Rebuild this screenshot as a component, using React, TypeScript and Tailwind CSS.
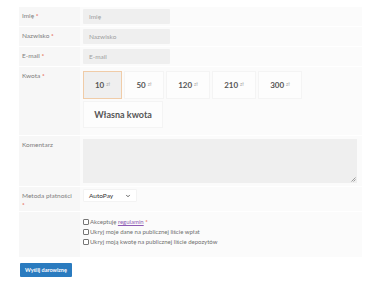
import { ChevronDown } from "lucide-react";

const Req = () => <span className="text-[#e2401c]"> *</span>;

const amounts = ["10", "50", "120", "210", "300"];

const TextInput = ({ placeholder }: { placeholder: string }) => (
  <div className="w-[87px] h-[15px] bg-[#efefef] rounded-[1px] px-[6px] flex items-center text-[6.5px] text-[#a0a0a0]">
    {placeholder}
  </div>
);

const Row = ({ label, children, last }: { label: React.ReactNode; children: React.ReactNode; last?: boolean }) => (
  <div className={`grid grid-cols-[61px_282px] ${last ? "" : "border-b border-white"}`}>
    <div className="bg-[#f7f7f7] px-[3px] pt-[4px] text-[6.5px] leading-[9px] text-[#808080]">{label}</div>
    <div className="bg-[#fbfbfb] px-[3px] py-[2px]">{children}</div>
  </div>
);

export default function App() {
  return (
    <div className="w-[369px] h-[288px] bg-white pt-[7px] pl-[19px]" style={{ fontFamily: "Lato, 'Open Sans', sans-serif" }}>
      <div className="w-[343px]">
        <Row label={<>Imię<Req /></>}>
          <TextInput placeholder="Imię" />
        </Row>
        <Row label={<>Nazwisko<Req /></>}>
          <TextInput placeholder="Nazwisko" />
        </Row>
        <Row label={<>E-mail<Req /></>}>
          <TextInput placeholder="E-mail" />
        </Row>
        <Row label={<>Kwota<Req /></>}>
          <div className="pt-[2px] pb-[5px] flex flex-col gap-[2px]">
            <div className="flex gap-[2px]">
              {amounts.map((a, i) => (
                <div
                  key={a}
                  className={`h-[28px] px-[10px] flex items-center justify-center gap-[2px] border ${
                    i === 0 ? "bg-[#efefef] border-[#f0cca8] w-[39px]" : "bg-[#fdfdfd] border-[#f4f4f4] min-w-[40px]"
                  } ${i >= 2 ? "w-[44px]" : ""}`}
                >
                  <span className="text-[8px] font-bold text-[#555]">{a}</span>
                  <span className="text-[5px] text-[#aaa]">zł</span>
                </div>
              ))}
            </div>
            <div className="w-[80px] h-[27px] bg-[#fdfdfd] border border-[#f4f4f4] flex items-center justify-center text-[9px] font-bold text-[#555]">
              Własna kwota
            </div>
          </div>
        </Row>
        <Row label="Komentarz">
          <div className="relative w-[274px] h-[44px] bg-[#efefef] mt-[1px] mb-[1px]">
            <svg className="absolute right-[1px] bottom-[1px]" width="5" height="5" viewBox="0 0 5 5">
              <path d="M4.5 0.5 L0.5 4.5 M4.5 2.5 L2.5 4.5" stroke="#888" strokeWidth="0.8" />
            </svg>
          </div>
        </Row>
        <Row label={<>Metoda płatności<br /><span className="text-[#e2401c]">*</span></>}>
          <div className="w-[54px] h-[13px] bg-white border border-[#f3f3f3] rounded-[1px] flex items-center justify-between px-[5px] text-[6.5px] text-[#333] mb-[7px]">
            <span>AutoPay</span>
            <ChevronDown size={6} strokeWidth={3} className="text-[#333]" />
          </div>
        </Row>
        <Row last label="">
          <div className="pt-[3px] pb-[8px] flex flex-col text-[6px] leading-[10px] text-[#707070]">
            {[
              <>Akceptuję <span className="text-[#8e5bb5] underline">regulamin</span><Req /></>,
              <>Ukryj moje dane na publicznej liście wpłat</>,
              <>Ukryj moją kwotę na publicznej liście depozytów</>,
            ].map((t, i) => (
              <div key={i} className="flex items-center gap-[1px]">
                <span className="inline-block w-[6px] h-[6px] border border-[#777] rounded-[1px] bg-white" />
                <span>{t}</span>
              </div>
            ))}
          </div>
        </Row>
      </div>
      <button className="mt-[6px] ml-[1px] w-[52px] h-[14px] bg-[#2a7bbf] rounded-[1px] text-white text-[5.5px] font-bold flex items-center justify-center">
        Wyślij darowiznę
      </button>
    </div>
  );
}
